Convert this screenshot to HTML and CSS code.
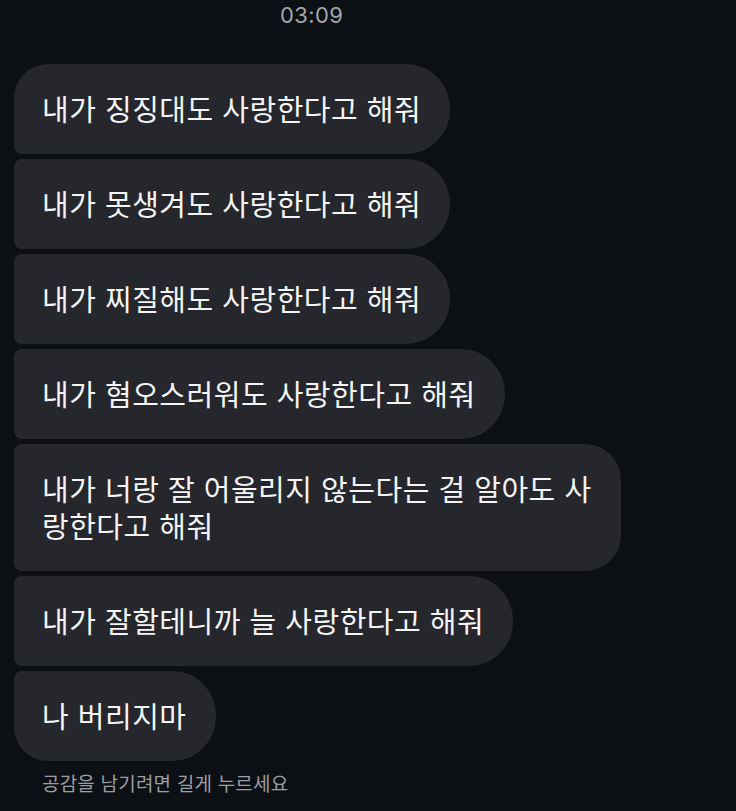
FILE: index.html
```html
<!DOCTYPE html>
<html lang="ko">
<head>
    <meta charset="UTF-8">
    <meta name="viewport" content="width=device-width, initial-scale=1.0">
    <title>메시지</title>
    <link rel="stylesheet" href="styles.css">
</head>
<body>
    <div class="chat">
        <div class="time">03:09</div>

        <!-- Message group -->
        <div class="group">
            <div class="bubble first">내가 징징대도 사랑한다고 해줘</div>
            <div class="bubble">내가 못생겨도 사랑한다고 해줘</div>
            <div class="bubble">내가 찌질해도 사랑한다고 해줘</div>
            <div class="bubble">내가 혐오스러워도 사랑한다고 해줘</div>
            <div class="bubble tall">내가 너랑 잘 어울리지 않는다는 걸 알아도 사<br>랑한다고 해줘</div>
            <div class="bubble">내가 잘할테니까 늘 사랑한다고 해줘</div>
            <div class="bubble last">나 버리지마</div>
        </div>

        <div class="hint">공감을 남기려면 길게 누르세요</div>
    </div>
</body>
</html>
```

FILE: styles.css
```css
* {
    margin: 0;
    padding: 0;
    box-sizing: border-box;
}

body {
    background-color: #0c0f14;
    font-family: 'Noto Sans CJK KR', 'Noto Sans', sans-serif;
    color: #f4f4f5;
    width: 736px;
    height: 811px;
    overflow: hidden;
}

.chat {
    display: flex;
    flex-direction: column;
}

.time {
    font-family: 'Inter', 'Liberation Sans', sans-serif;
    font-size: 22px;
    color: #a2a5ab;
    height: 64px;
    padding-top: 2px;
    padding-left: 280px;
    letter-spacing: 0.4px;
}

.group {
    display: flex;
    flex-direction: column;
    align-items: flex-start;
    gap: 5px;
    padding-left: 14px;
}

.bubble {
    background-color: #25272c;
    font-size: 29px;
    line-height: 37px;
    letter-spacing: 0.5px;
    padding: 26px 29px 27px 28px;
    border-radius: 8px 44px 44px 8px;
    max-width: 620px;
}

.bubble.first {
    border-top-left-radius: 34px;
}

.bubble.tall {
    border-radius: 8px 36px 36px 8px;
}

.bubble.last {
    border-bottom-left-radius: 34px;
}

.hint {
    font-size: 19px;
    letter-spacing: 0.2px;
    color: #9b9ea4;
    padding-left: 42px;
    margin-top: 8px;
}
```
